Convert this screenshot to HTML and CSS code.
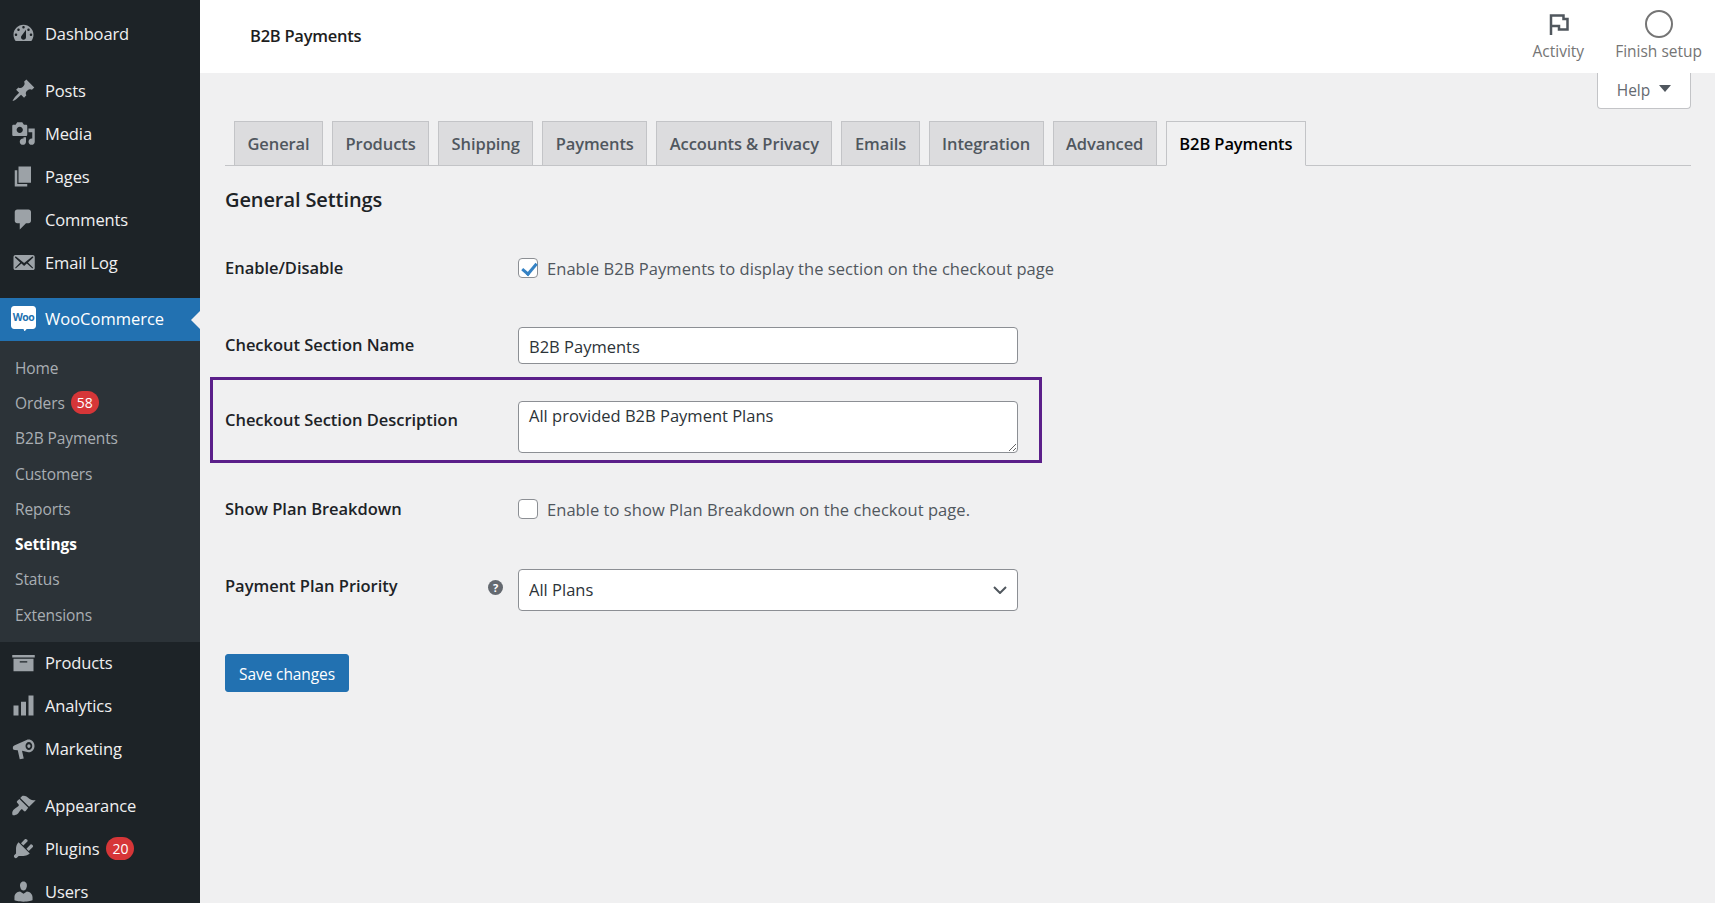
FILE: index.html
```html
<!DOCTYPE html>
<html lang="en">
<head>
    <meta charset="UTF-8">
    <title>B2B Payments</title>
    <link rel="stylesheet" href="styles.css">
</head>
<body>
    <nav class="sidebar">
        <a class="menu-item first" href="#">
            <svg class="menu-icon" viewBox="0 0 20 20"><path fill-rule="evenodd" d="M3.76 16h12.48c1.1-1.37 1.76-3.11 1.76-5 0-4.42-3.58-8-8-8s-8 3.58-8 8c0 1.89.66 3.63 1.76 5zM10 4c.55 0 1 .45 1 1s-.45 1-1 1-1-.45-1-1 .45-1 1-1zM6 6c.55 0 1 .45 1 1s-.45 1-1 1-1-.45-1-1 .45-1 1-1zm8 0c.55 0 1 .45 1 1s-.45 1-1 1-1-.45-1-1 .45-1 1-1zm-5.37 5.55L12 7v6c0 1.1-.9 2-2 2s-2-.9-2-2c0-.57.24-1.08.63-1.45zM4 10c.55 0 1 .45 1 1s-.45 1-1 1-1-.45-1-1 .45-1 1-1zm12 0c.55 0 1 .45 1 1s-.45 1-1 1-1-.45-1-1 .45-1 1-1z"/></svg>
            <span>Dashboard</span>
        </a>
        <a class="menu-item gap-top" href="#">
            <svg class="menu-icon" viewBox="0 0 20 20"><path d="M10.44 3.02l1.82-1.82 6.36 6.35-1.83 1.82c-1.05-.68-2.48-.57-3.41.36l-.75.75c-.92.93-1.04 2.35-.35 3.41l-1.83 1.82-2.41-2.41-2.8 2.79c-.42.42-3.38 2.71-3.8 2.29s1.86-3.39 2.28-3.81l2.79-2.79L4.1 9.36l1.83-1.82c1.05.69 2.48.57 3.4-.36l.75-.75c.93-.92 1.05-2.35.36-3.41z"/></svg>
            <span>Posts</span>
        </a>
        <a class="menu-item" href="#">
            <svg class="menu-icon" viewBox="0 0 20 20"><path fill-rule="evenodd" d="M13 11V4c0-.55-.45-1-1-1h-1.67L9 1H5L3.67 3H2c-.55 0-1 .45-1 1v7c0 .55.45 1 1 1h10c.55 0 1-.45 1-1zM7 4.5c1.38 0 2.5 1.12 2.5 2.5S8.38 9.5 7 9.5 4.5 8.38 4.5 7 5.62 4.5 7 4.5zM14 6h5v10.5c0 1.38-1.12 2.5-2.5 2.5S14 17.88 14 16.5s1.12-2.5 2.5-2.5c.17 0 .34.02.5.05V9h-3V6zm-4 8.05V13h2v3.5c0 1.38-1.12 2.5-2.5 2.5S7 17.88 7 16.5 8.12 14 9.5 14c.17 0 .34.02.5.05z"/></svg>
            <span>Media</span>
        </a>
        <a class="menu-item" href="#">
            <svg class="menu-icon" viewBox="0 0 20 20"><path d="M6 15V2h10v13H6zm-1 1h8v2H3V5h2v11z"/></svg>
            <span>Pages</span>
        </a>
        <a class="menu-item" href="#">
            <svg class="menu-icon" viewBox="0 0 20 20"><path d="M5 2h9c1.1 0 2 .9 2 2v7c0 1.1-.9 2-2 2h-2l-5 5v-5H5c-1.1 0-2-.9-2-2V4c0-1.1.9-2 2-2z"/></svg>
            <span>Comments</span>
        </a>
        <a class="menu-item" href="#">
            <svg class="menu-icon" viewBox="0 0 20 20"><path fill-rule="evenodd" d="M19 14.5v-9c0-.83-.67-1.5-1.5-1.5H3.49c-.83 0-1.5.67-1.5 1.5v9c0 .83.67 1.5 1.5 1.5H17.5c.83 0 1.5-.67 1.5-1.5zm-1.31-9.11c.33.33.15.67-.03.84L13.6 9.95l3.9 4.06c.12.14.2.36.06.51-.13.16-.43.15-.56.05l-4.37-3.73-2.14 1.95-2.13-1.95-4.37 3.73c-.13.1-.43.11-.56-.05-.14-.15-.06-.37.06-.51l3.9-4.06-4.06-3.72c-.18-.17-.36-.51-.03-.84s.67-.17.95.07l6.24 5.04 6.25-5.04c.28-.24.62-.4.95-.07z"/></svg>
            <span>Email Log</span>
        </a>
        <a class="menu-item active" href="#">
            <svg class="menu-icon woo-icon" viewBox="0 0 24 24"><path d="M3 0h18c1.700 0 3 1.300 3 3v16c0 1.700-1.300 3-3 3h-6l-2 2.500-1-2.500H3c-1.700 0-3-1.300-3-3V3c0-1.700 1.300-3 3-3z"/><text class="woo-text" x="12" y="14" text-anchor="middle">Woo</text></svg>
            <span>WooCommerce</span>
        </a>
        <div class="submenu">
            <a class="sub-item" href="#">Home</a>
            <a class="sub-item" href="#">Orders <span class="badge">58</span></a>
            <a class="sub-item" href="#">B2B Payments</a>
            <a class="sub-item" href="#">Customers</a>
            <a class="sub-item" href="#">Reports</a>
            <a class="sub-item current" href="#">Settings</a>
            <a class="sub-item" href="#">Status</a>
            <a class="sub-item" href="#">Extensions</a>
        </div>
        <a class="menu-item" href="#">
            <svg class="menu-icon" viewBox="0 0 20 20"><path fill-rule="evenodd" d="M19 4v2H1V4h18zM2 7h16v10H2V7zm11 3V9H7v1h6z"/></svg>
            <span>Products</span>
        </a>
        <a class="menu-item" href="#">
            <svg class="menu-icon" viewBox="0 0 20 20"><path d="M18 18V2h-4v16h4zm-6 0V7H8v11h4zm-6 0v-8H2v8h4z"/></svg>
            <span>Analytics</span>
        </a>
        <a class="menu-item" href="#">
            <svg class="menu-icon" viewBox="0 0 20 20"><path fill-rule="evenodd" d="M1.500 9C1.500 8.200 2 7.700 3 7.300L12.500 3.100C15.500 2 18.800 4.200 18.800 8C18.800 11.500 15.800 13.800 13 12.800L8.800 11.800L10.200 18L7 18.500L5.400 11.300L3 11.200C2 11.100 1.500 10.700 1.500 10ZM14.300 4.800C12.800 4.800 11.600 6.200 11.600 8S12.800 11.200 14.300 11.200S17 9.800 17 8S15.800 4.800 14.300 4.800ZM14.300 6.500C15.100 6.500 15.600 7.200 15.600 8S15.100 9.500 14.300 9.500S13 8.800 13 8S13.500 6.500 14.300 6.500Z"/></svg>
            <span>Marketing</span>
        </a>
        <a class="menu-item gap-top" href="#">
            <svg class="menu-icon" viewBox="0 0 20 20"><path d="M14.480 11.060L7.410 3.990l1.500-1.500c.5-.56 2.300-.47 3.510.32 1.210.8 1.430 1.280 2.910 2.100 1.180.64 2.450 1.260 4.450.85zm-.71.71L6.700 4.700 4.930 6.470c-.39.39-.39 1.020 0 1.410l1.060 1.060c.39.39.39 1.030 0 1.420-.6.6-1.430 1.110-2.210 1.690-.35.26-.7.53-1.010.84C1.430 13.710.5 15.800 1.200 17.500c.55.550 3 .3 4.170-.9.310-.31.580-.66.840-1.010.580-.78 1.090-1.610 1.690-2.210.39-.39 1.020-.39 1.410 0l1.060 1.060c.39.39 1.020.39 1.410 0z"/></svg>
            <span>Appearance</span>
        </a>
        <a class="menu-item" href="#">
            <svg class="menu-icon" viewBox="0 0 20 20"><path d="M13.110 4.360L9.870 7.600 8 5.730l3.240-3.240c.35-.34 1.050-.2 1.560.32.52.51.66 1.210.31 1.550zm-8 1.770l.91-1.120 9.010 9.010-1.190.84c-.71.71-2.630 1.160-3.820 1.160H6.140L4.900 17.260c-.59.59-1.540.59-2.120 0-.59-.58-.59-1.530 0-2.120l1.240-1.240v-3.880c0-1.130.4-3.190 1.090-3.890zm7.260 3.970l3.240-3.240c.34-.35 1.040-.21 1.550.31.52.51.66 1.210.31 1.550l-3.240 3.250z"/></svg>
            <span>Plugins</span>
            <span class="badge">20</span>
        </a>
        <a class="menu-item" href="#">
            <svg class="menu-icon" viewBox="0 0 20 20"><path d="M10 9.250c-2.270 0-2.730-3.440-2.730-3.440C7 4.020 7.820 2 9.970 2c2.160 0 2.980 2.020 2.710 3.810 0 0-.41 3.440-2.680 3.440zm0 2.570L12.720 10c2.390 0 4.520 2.330 4.520 4.530v2.490s-3.650 1.130-7.240 1.130c-3.650 0-7.240-1.130-7.240-1.130v-2.490c0-2.250 1.940-4.480 4.470-4.480z"/></svg>
            <span>Users</span>
        </a>
    </nav>

    <div class="main">
        <header class="topbar">
            <div class="page-title">B2B Payments</div>
            <div class="top-actions">
                <a class="top-action" href="#">
                    <svg class="top-icon" viewBox="0 0 24 24"><path class="flag-line" d="M5 23V3.500h12.500v3.500h4v10.500h-8.500v-3.500H5"/></svg>
                    <span>Activity</span>
                </a>
                <a class="top-action" href="#">
                    <span class="setup-ring"></span>
                    <span>Finish setup</span>
                </a>
            </div>
        </header>

        <div class="content">
            <div class="help-row">
                <button type="button" class="help-tab">Help <span class="caret"></span></button>
            </div>

            <div class="tabs">
                <a class="tab" href="#">General</a>
                <a class="tab" href="#">Products</a>
                <a class="tab" href="#">Shipping</a>
                <a class="tab" href="#">Payments</a>
                <a class="tab" href="#">Accounts &amp; Privacy</a>
                <a class="tab" href="#">Emails</a>
                <a class="tab" href="#">Integration</a>
                <a class="tab" href="#">Advanced</a>
                <a class="tab tab-active" href="#">B2B Payments</a>
            </div>

            <h2 class="section-title">General Settings</h2>

            <form action="javascript:void(0);">
                <div class="row row-enable">
                    <label class="row-label" for="enable">Enable/Disable</label>
                    <label class="check-line"><input type="checkbox" id="enable" checked> Enable B2B Payments to display the section on the checkout page</label>
                </div>
                <div class="row row-name">
                    <label class="row-label" for="name">Checkout Section Name</label>
                    <input class="field" type="text" id="name" value="B2B Payments">
                </div>
                <div class="row row-highlight">
                    <label class="row-label" for="desc">Checkout Section Description</label>
                    <textarea class="field area" id="desc">All provided B2B Payment Plans</textarea>
                </div>
                <div class="row row-plan">
                    <label class="row-label" for="plan">Show Plan Breakdown</label>
                    <label class="check-line"><input type="checkbox" id="plan"> Enable to show Plan Breakdown on the checkout page.</label>
                </div>
                <div class="row row-priority">
                    <label class="row-label" for="priority">Payment Plan Priority
                        <span class="tip">?</span>
                    </label>
                    <div class="select-wrap">
                        <select class="field select" id="priority">
                            <option>All Plans</option>
                        </select>
                        <svg class="chevron" viewBox="0 0 14 8"><path d="M1 1l6 6 6-6"/></svg>
                    </div>
                </div>
                <button type="submit" class="save-btn">Save changes</button>
            </form>
        </div>
    </div>
</body>
</html>
```

FILE: styles.css
```css
* { margin: 0; padding: 0; box-sizing: border-box; }
html, body { height: 100%; overflow: hidden; }
body { display: flex; font-family: "Open Sans", "Noto Sans", sans-serif; background: #f0f0f1; color: #3c434a; font-size: 16.5px; }
a { text-decoration: none; color: inherit; }

/* sidebar */
.sidebar { width: 200px; flex-shrink: 0; background: #1d2327; height: 100vh; overflow: hidden; display: flex; flex-direction: column; }
.menu-item { position: relative; display: flex; align-items: center; flex-shrink: 0; height: 43px; padding: 0 0 3px 11px; color: #f0f0f1; font-size: 16.5px; letter-spacing: -0.12px; }
.menu-item.first { margin-top: 13px; }
.menu-item.gap-top { margin-top: 14px; }
.menu-icon { width: 25px; height: 25px; margin-right: 9px; flex-shrink: 0; fill: #9ca2a7; }
.menu-item.active { margin-top: 13px; background: #2271b1; color: #fff; letter-spacing: 0; }
.menu-item.active::after { content: ''; position: absolute; right: 0; top: 50%; margin-top: -9px; border: 9px solid transparent; border-right-color: #f0f0f1; border-left-width: 0; }
.woo-icon { fill: #fff; }
.woo-text { font-family: "Open Sans", sans-serif; font-size: 10px; font-weight: 700; fill: #2271b1; letter-spacing: -0.5px; }
.submenu { flex-shrink: 0; background: #2c3338; padding: 9px 0 10px; }
.sub-item { display: flex; align-items: center; gap: 6px; height: 35.300px; padding-left: 15px; font-size: 15.500px; color: #a9aeb3; letter-spacing: -0.1px; }
.sub-item.current { color: #fff; font-weight: 700; }
.badge { display: inline-block; min-width: 28px; height: 23px; line-height: 23px; border-radius: 12px; background: #d63638; color: #fff; font-size: 14px; text-align: center; font-weight: 400; letter-spacing: 0; }
.menu-item .badge { margin-left: 7px; }

/* top bar */
.main { flex: 1; min-width: 0; display: flex; flex-direction: column; }
.topbar { height: 73px; flex-shrink: 0; background: #fff; display: flex; justify-content: space-between; padding-left: 50px; }
.page-title { align-self: center; margin-bottom: 2px; font-size: 16.500px; font-weight: 600; color: #1e1e1e; letter-spacing: -0.25px; }
.top-actions { display: flex; }
.top-action { display: flex; flex-direction: column; align-items: center; justify-content: flex-end; padding: 0 13px 11px 15px; font-size: 15.500px; color: #757575; gap: 3px; }
.top-action:first-child { padding-right: 16px; }
.top-icon { width: 24px; height: 24px; margin-bottom: 1px; }
.flag-line { fill: none; stroke: #50575e; stroke-width: 2.500; }
.setup-ring { width: 28px; height: 28px; border: 2.500px solid #757575; border-radius: 50%; margin-bottom: -1px; }

/* content */
.content { padding: 0 24px 0 25px; }
.help-row { display: flex; justify-content: flex-end; }
.help-tab { width: 94px; height: 36px; padding-bottom: 2px; display: flex; align-items: center; justify-content: center; gap: 9px; background: #fff; border: 1px solid #c3c4c7; border-top: none; border-radius: 0 0 4px 4px; font: inherit; font-size: 15.500px; color: #646970; }
.caret { border: 6px solid transparent; border-top: 7px solid #50575e; border-bottom: none; margin-top: -2px; }

.tabs { display: flex; gap: 9px; height: 45px; margin-top: 12px; padding-left: 9px; border-bottom: 1px solid #c3c4c7; }
.tab { height: 45px; padding: 0 12.500px; display: flex; align-items: center; background: #dcdcde; border: 1px solid #c3c4c7; color: #50575e; font-weight: 600; font-size: 16.500px; letter-spacing: -0.1px; }
.tab-active { background: #f0f0f1; border-bottom-color: #f0f0f1; color: #000; }
.section-title { margin-top: 20px; font-size: 20px; line-height: 27px; font-weight: 600; color: #1d2327; letter-spacing: -0.1px; }

/* form rows */
.row { display: flex; }
.row-label { width: 293px; flex-shrink: 0; font-weight: 600; font-size: 16.500px; color: #1d2327; letter-spacing: -0.03px; display: flex; justify-content: space-between; padding-right: 15px; }
.row-enable { margin-top: 37px; height: 36px; align-items: center; }
.row-enable .row-label, .row-name .row-label, .row-plan .row-label { padding-bottom: 2px; }
.row-name { margin-top: 41px; height: 36px; align-items: center; }
.row-highlight { margin: 14px 0 0 -15px; width: 832px; height: 86px; border: 3px solid #5b1f8a; padding: 21px 0 0 12px; }
.row-highlight .row-label { margin-top: 7px; }
.row-plan { margin-top: 28px; height: 36px; align-items: center; }
.row-priority { margin-top: 42px; align-items: flex-start; }
.row-priority .row-label { margin-top: 5px; }
.check-line { display: flex; align-items: center; gap: 9px; color: #50575e; font-size: 16.500px; letter-spacing: 0.05px; white-space: nowrap; }
input[type="checkbox"] { appearance: none; position: relative; width: 20px; height: 20px; flex-shrink: 0; background: #fff; border: 1px solid #8c8f94; border-radius: 4px; }
input[type="checkbox"]:checked::before { content: ''; position: absolute; left: 6px; top: 1px; width: 6px; height: 12px; border: solid #3582c4; border-width: 0 3px 3px 0; transform: rotate(40deg); }
.field { display: block; width: 500px; background: #fff; border: 1px solid #8c8f94; border-radius: 4px; font: inherit; font-size: 16.500px; color: #2c3338; padding: 0 10px; letter-spacing: 0; }
input.field { height: 37px; padding-top: 2px; }
.area { height: 52px; padding-top: 2px; line-height: 24px; }
.select-wrap { position: relative; width: 500px; }
.select { appearance: none; height: 42px; padding-bottom: 1px; }
.chevron { position: absolute; right: 11px; top: 17px; width: 14px; height: 8px; fill: none; stroke: #50575e; stroke-width: 2; pointer-events: none; }
.tip { width: 15px; height: 15px; border-radius: 50%; background: #646970; color: #fff; font-size: 11px; font-weight: 700; line-height: 15px; text-align: center; margin-top: 6px; letter-spacing: 0; }
.save-btn { display: block; margin-top: 43px; width: 124px; height: 38px; padding-top: 1px; background: #2271b1; color: #fff; border: 1px solid #2271b1; border-radius: 3px; font: inherit; font-size: 15.500px; letter-spacing: -0.1px; }
```
